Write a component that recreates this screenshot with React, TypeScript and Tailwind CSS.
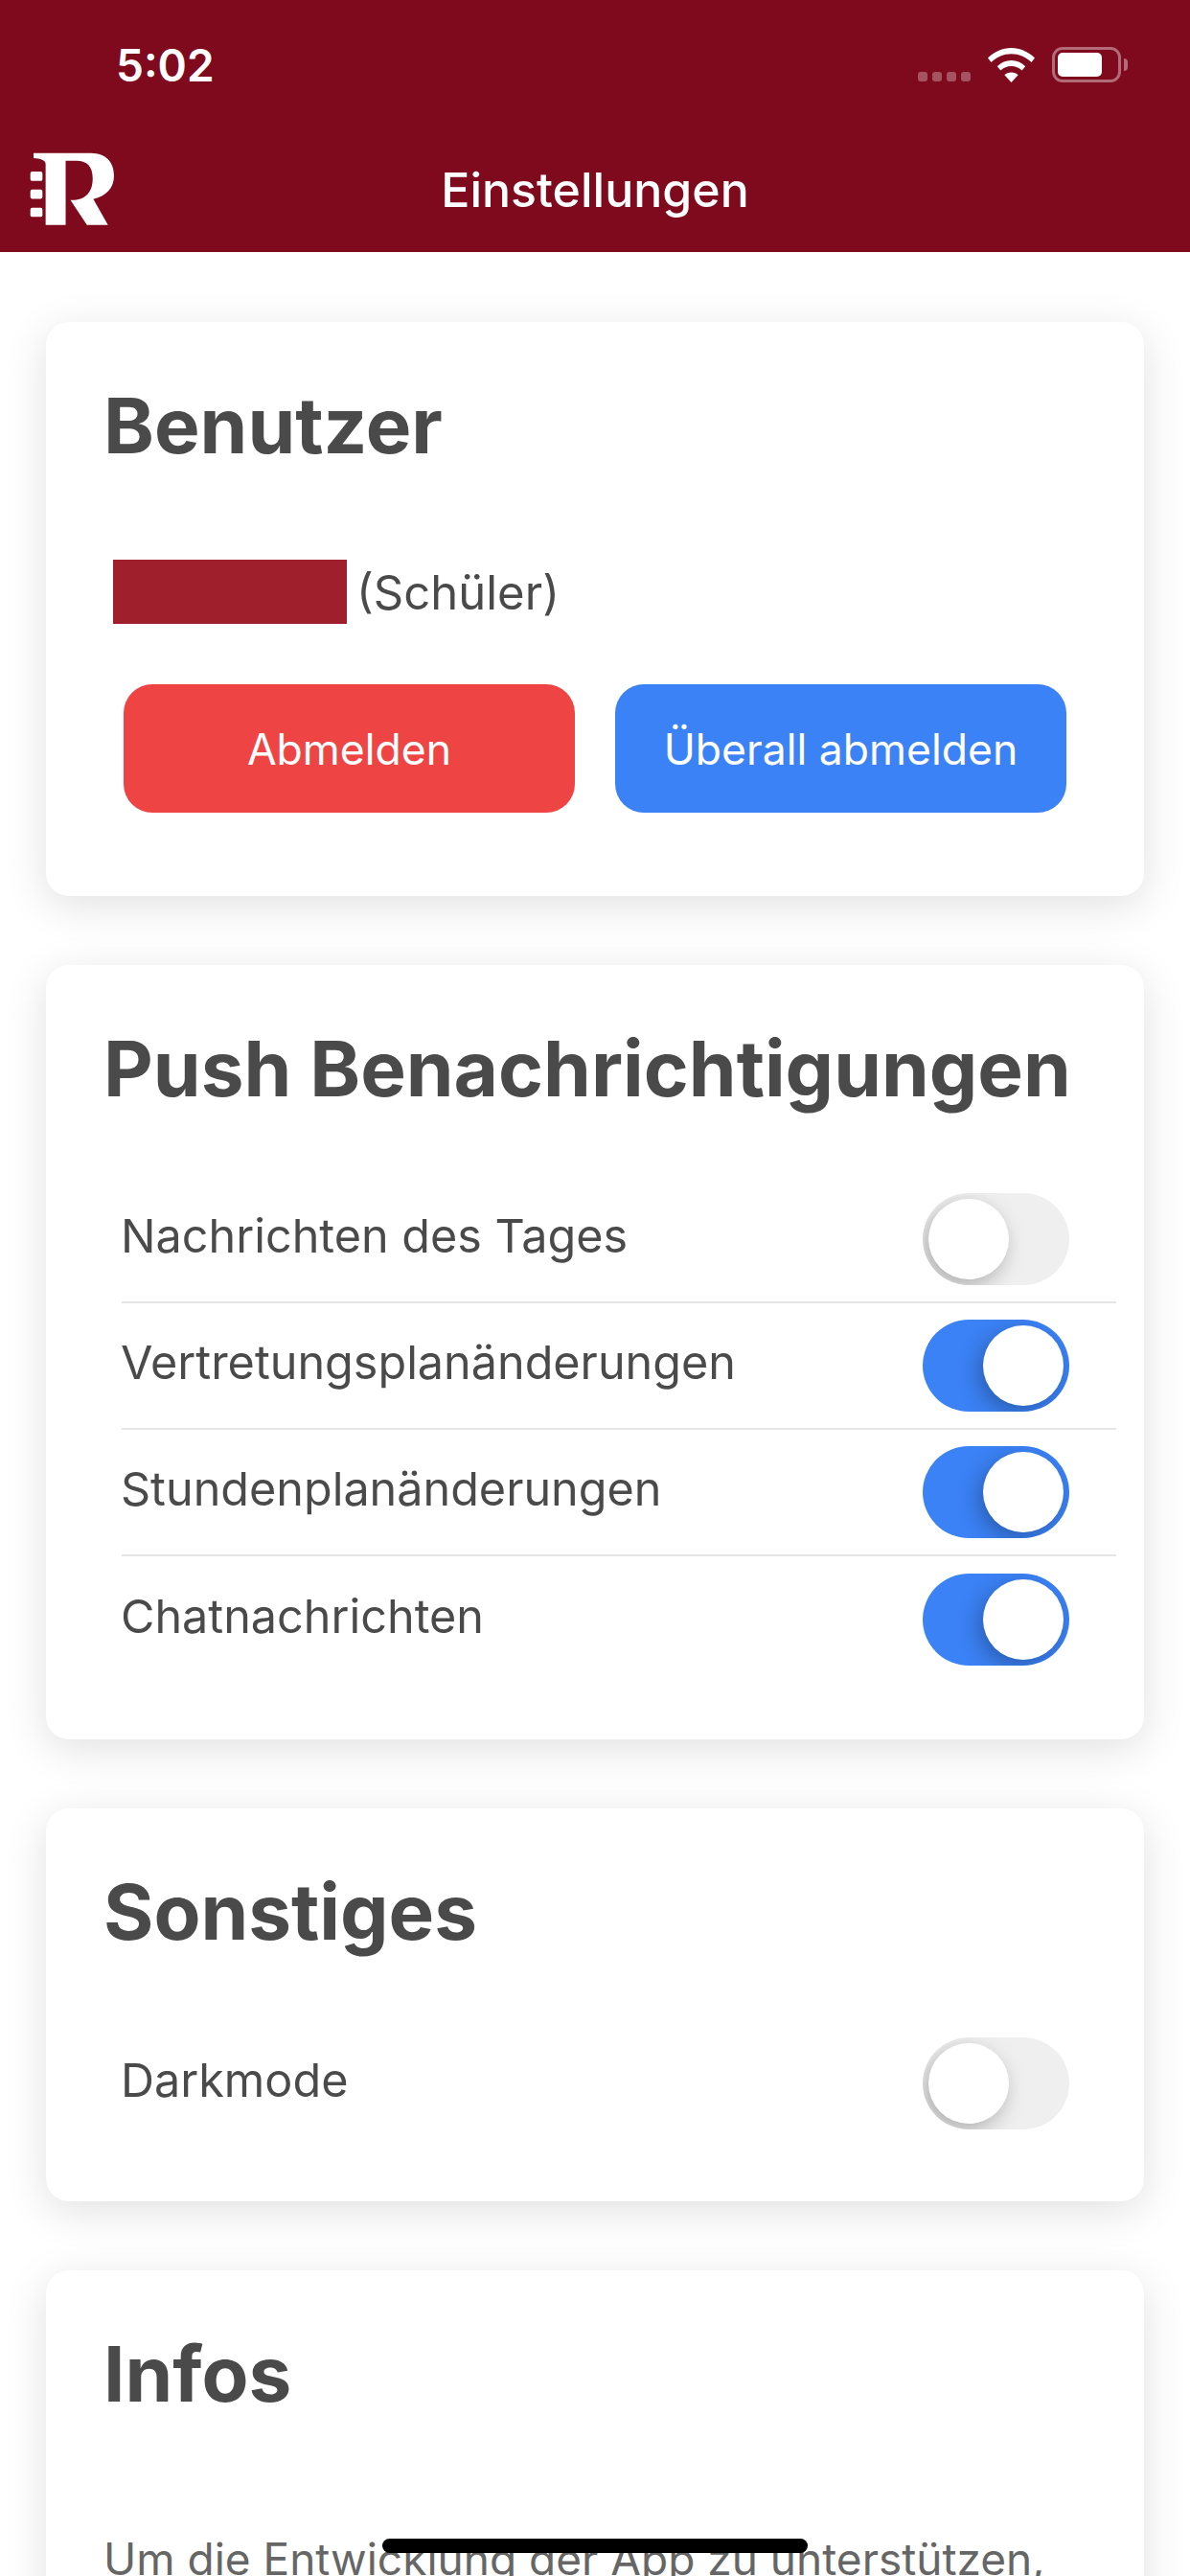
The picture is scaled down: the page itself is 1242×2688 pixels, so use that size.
import React from "react";

const pushOptions = [
  { label: "Nachrichten des Tages", enabled: false },
  { label: "Vertretungsplanänderungen", enabled: true },
  { label: "Stundenplanänderungen", enabled: true },
  { label: "Chatnachrichten", enabled: true },
];

function Logo() {
  return (
    <svg viewBox="90 85 275 235" className="w-[92px] h-[78px] ml-[30px] mt-[15px]" fill="#fff">
      <path d="M104 90 L285 90 C332 91 357 118 357 162 C357 200 332 226 292 235 L338 316 L272 316 L220 238 C262 240 290 218 290 170 C290 132 272 114 240 114 L205 114 L205 316 L142 316 L142 124 C142 113 125 107 104 106 Z" />
      <rect x="94" y="148" width="38" height="30" rx="6" />
      <rect x="94" y="205" width="38" height="29" rx="6" />
      <rect x="94" y="262" width="38" height="29" rx="6" />
    </svg>
  );
}

function StatusBar() {
  return (
    <div className="h-[143px] flex items-start justify-between pl-[121px] pr-[72px]">
      <span className="mt-[38px] text-[46px] leading-[60px] font-semibold text-white">5:02</span>
      <div className="flex items-end mt-[49px] h-[37px]">
        <div className="flex gap-[5px] mb-[1px] mr-[18px]">
          <span className="w-[10px] h-[10px] rounded-[3px] bg-white/30" />
          <span className="w-[10px] h-[10px] rounded-[3px] bg-white/30" />
          <span className="w-[10px] h-[10px] rounded-[3px] bg-white/30" />
          <span className="w-[10px] h-[10px] rounded-[3px] bg-white/30" />
        </div>
        <svg viewBox="0 0 49 36" className="w-[49px] h-[36px] mr-[18px]" fill="#fff">
          <path d="M24.5 0 C33.5 0 42 3.6 49 10.5 L45.5 15 C39.5 9.3 32.3 6.2 24.5 6.2 C16.7 6.2 9.5 9.3 3.5 15 L0 10.5 C7 3.6 15.5 0 24.5 0 Z" />
          <path d="M24.5 13 C30 13 35 15.2 39.2 19.2 L35.6 23.6 C32.5 20.7 28.7 19.1 24.5 19.1 C20.3 19.1 16.5 20.7 13.4 23.6 L9.8 19.2 C14 15.2 19 13 24.5 13 Z" />
          <path d="M24.5 25.5 C27.2 25.5 29.7 26.5 31.6 28.2 L24.5 36 L17.4 28.2 C19.3 26.5 21.8 25.5 24.5 25.5 Z" />
        </svg>
        <div className="relative w-[72px] h-[37px] rounded-[11px] border-[3px] border-white/40 p-[3px]">
          <div className="w-[46px] h-full rounded-[5px] bg-white" />
          <span className="absolute left-[72px] top-[9px] w-[4px] h-[13px] rounded-r-[4px] bg-white/40" />
        </div>
      </div>
    </div>
  );
}

function Toggle({ enabled }: { enabled: boolean }) {
  return (
    <div
      className={
        enabled
          ? "w-[153px] h-[96px] shrink-0 rounded-full overflow-hidden flex items-center justify-end px-[6px] bg-[#3b82f6]"
          : "w-[153px] h-[96px] shrink-0 rounded-full overflow-hidden flex items-center justify-start px-[6px] bg-[#efefef]"
      }
    >
      <div className="w-[84px] h-[84px] rounded-full bg-white shadow-[-5px_7px_22px_rgba(0,0,0,0.28)]" />
    </div>
  );
}

function SettingRow({ label, enabled, divider }: { label: string; enabled: boolean; divider: boolean }) {
  return (
    <div
      className={
        divider
          ? "h-[132px] flex items-center justify-between pr-[49px] border-b-2 border-[#e6e6e6]"
          : "h-[132px] flex items-center justify-between pr-[49px]"
      }
    >
      <span className="-ml-[1px] -mt-[6px] text-[48.5px] leading-[60px] text-[#4a4a4a]">{label}</span>
      <Toggle enabled={enabled} />
    </div>
  );
}

function Card({ title, children, className }: { title: string; children: React.ReactNode; className: string }) {
  return (
    <section className={"bg-white rounded-[24px] shadow-[0_10px_45px_rgba(0,0,0,0.12)] pt-[58px] pl-[62px] " + className}>
      <h2 className="-ml-[2px] text-[80px] leading-[100px] font-bold text-[#4a4a4a]">{title}</h2>
      {children}
    </section>
  );
}

export default function App() {
  return (
    <div className="relative w-[1242px] h-[2688px] overflow-hidden bg-white font-['Inter',sans-serif]">
      <header className="h-[263px] bg-[#7f0a1d]">
        <StatusBar />
        <div className="grid grid-cols-[1fr_auto_1fr] items-start h-[120px]">
          <Logo />
          <h1 className="mt-[25px] text-[50px] leading-[60px] font-medium text-white">Einstellungen</h1>
          <div />
        </div>
      </header>

      <main className="flex flex-col gap-[72px] px-[48px] pt-[73px]">
        <Card title="Benutzer" className="pb-[87px] pr-[81px]">
          <div className="mt-[90px] ml-[8px] flex items-center gap-[10px]">
            <div className="w-[244px] h-[67px] bg-[#9f1f2d]" />
            <span className="mt-[2px] text-[49px] leading-[60px] text-[#4a4a4a]">(Schüler)</span>
          </div>
          <div className="mt-[63px] ml-[19px] flex gap-[42px]">
            <button className="flex-1 h-[134px] pt-[2px] rounded-[30px] bg-[#ef4444] text-[44.5px] text-white">Abmelden</button>
            <button className="flex-1 h-[134px] pt-[2px] rounded-[30px] bg-[#3b82f6] text-[44.5px] text-white">Überall abmelden</button>
          </div>
        </Card>

        <Card title="Push Benachrichtigungen" className="pb-[59px] pr-[29px]">
          <div className="mt-[63px] ml-[17px]">
            {pushOptions.map((option, index) => (
              <SettingRow
                key={option.label}
                label={option.label}
                enabled={option.enabled}
                divider={index < pushOptions.length - 1}
              />
            ))}
          </div>
        </Card>

        <Card title="Sonstiges" className="pb-[57px] pr-[29px]">
          <div className="mt-[63px] ml-[17px]">
            <SettingRow label="Darkmode" enabled={false} divider={false} />
          </div>
        </Card>

        <Card title="Infos" className="pb-[60px] pr-[62px]">
          <p className="-ml-[2px] mt-[109px] text-[46px] leading-[68px] text-[#666666]">
            Um die Entwicklung der App zu unterstützen, kannst du anonyme Nutzungsdaten senden.
          </p>
        </Card>
      </main>

      {/* iOS home indicator */}
      <div className="absolute left-[399px] top-[2649px] w-[444px] h-[15px] rounded-full bg-black" />
    </div>
  );
}
